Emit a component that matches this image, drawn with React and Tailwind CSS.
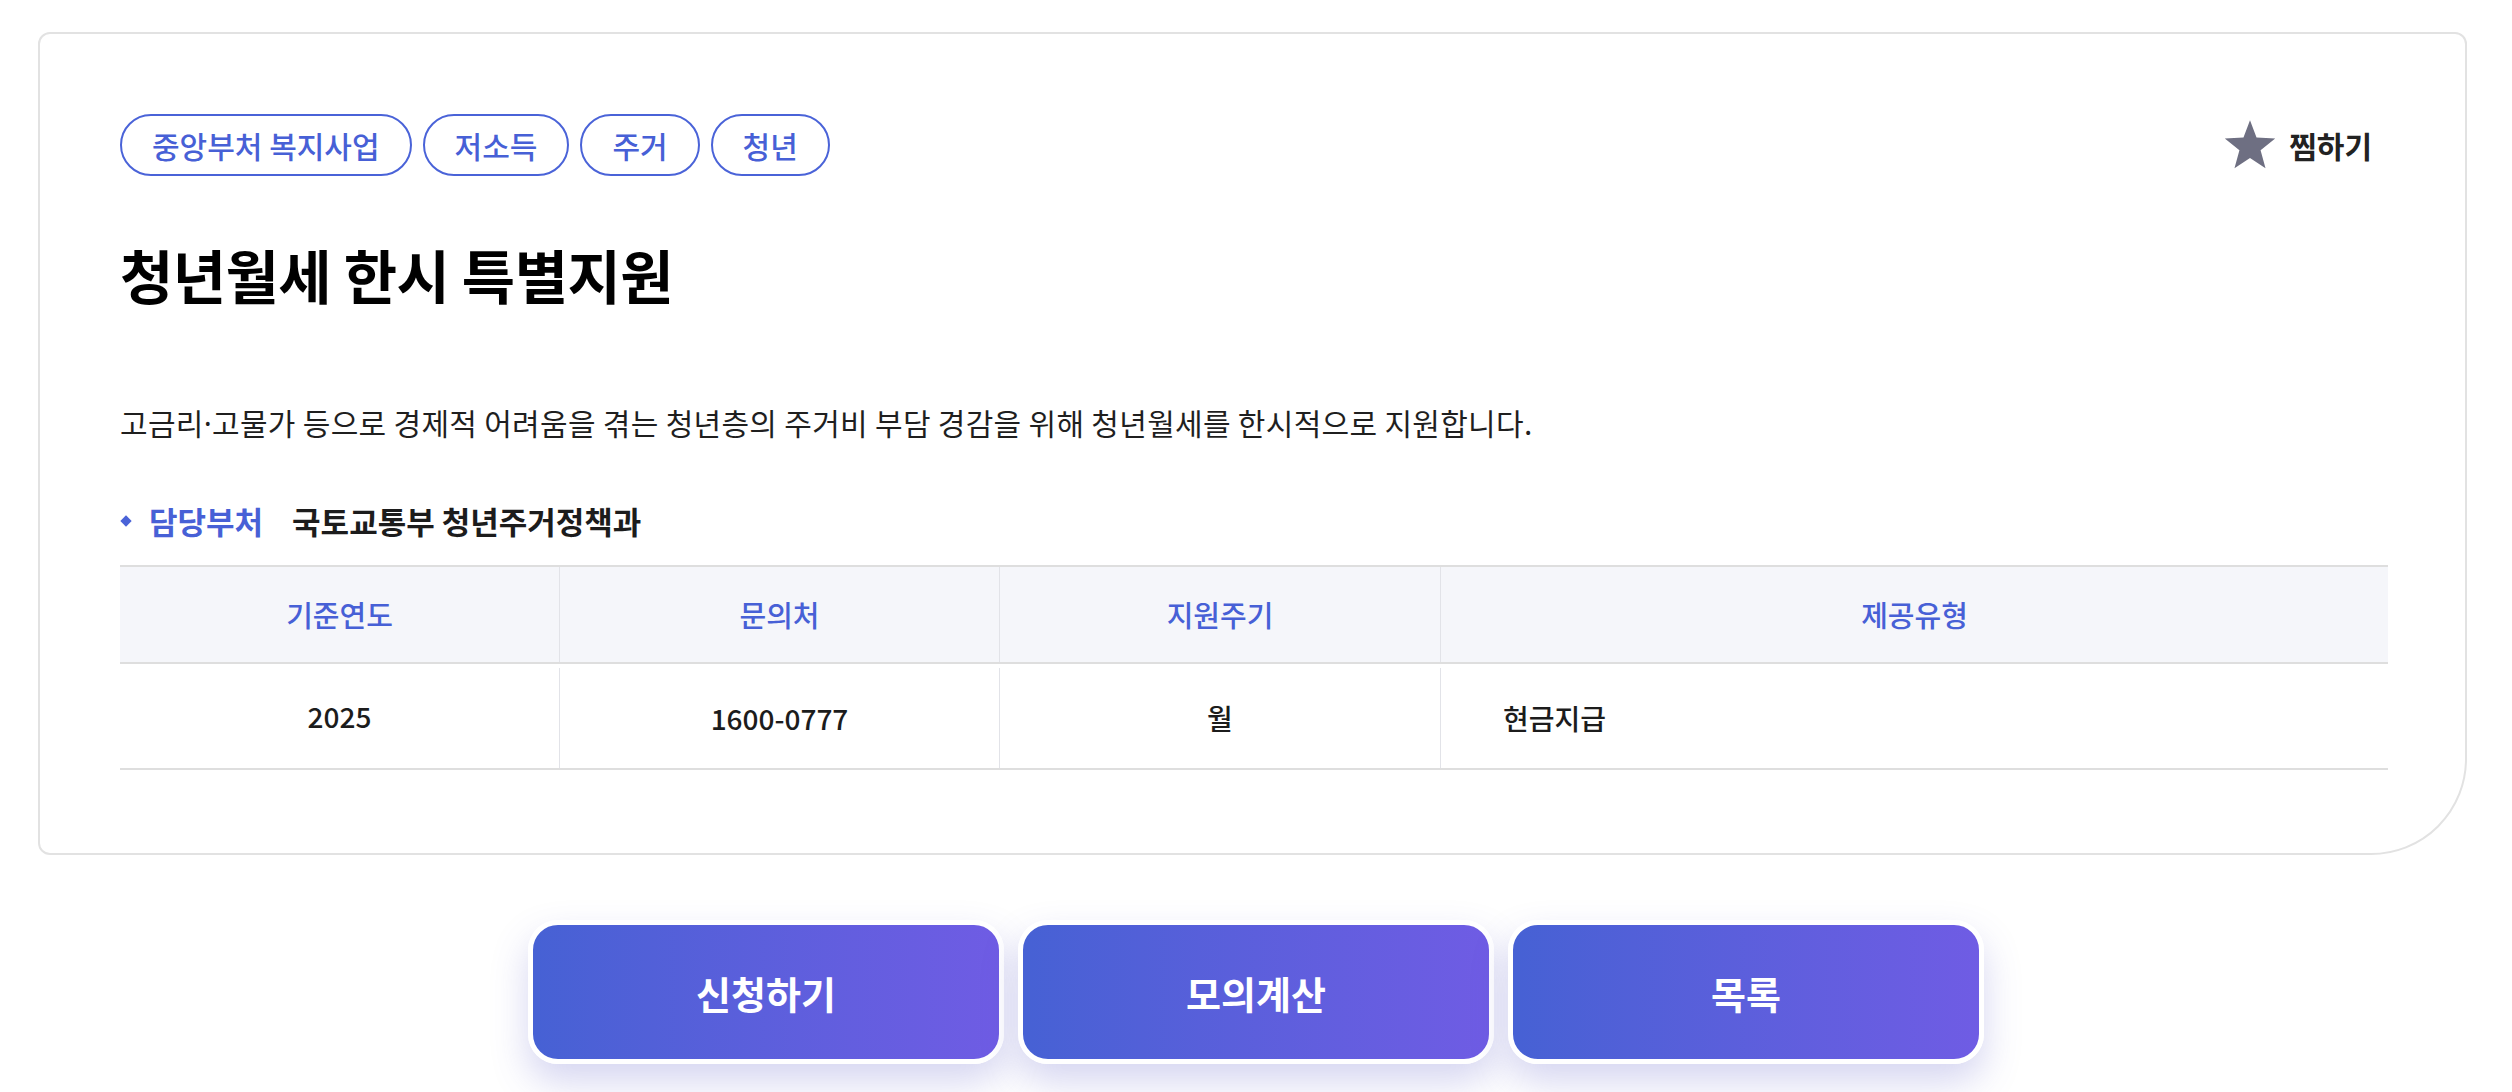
import React from "react";

const tags = ["중앙부처 복지사업", "저소득", "주거", "청년"];

function StarIcon() {
  return (
    <svg width="54" height="52" viewBox="0 0 24 23" aria-hidden="true">
      <polygon
        points="12,0.5 14.9,8.2 23.2,8.6 16.7,13.8 18.9,21.8 12,17.3 5.1,21.8 7.3,13.8 0.8,8.6 9.1,8.2"
        fill="#6e6f82"
      />
    </svg>
  );
}

export default function App() {
  return (
    <div className="min-h-[1092px] w-[2512px] bg-white font-['Noto_Sans_CJK_KR','Noto_Sans',sans-serif] text-[#1c1c1c]">
      <div className="pt-[32px] pl-[38px]">
        <div className="w-[2429px] border-2 border-[#e2e2e2] rounded-tl-[12px] rounded-tr-[12px] rounded-bl-[12px] rounded-br-[96px] bg-white pl-[80px] pr-[77px] pt-[80px] pb-[83px]">
          <div className="flex items-center justify-between">
            <div className="flex items-center gap-[11px]">
              {tags.map((t) => (
                <span
                  key={t}
                  className="flex h-[62px] items-center rounded-full border-2 border-[#4a63d8] px-[30px] text-[30px] font-medium leading-none text-[#4760d6]"
                >
                  {t}
                </span>
              ))}
            </div>
            <button className="flex items-center gap-[12px] pr-[16px] text-[30px] font-semibold text-[#222]">
              <StarIcon />
              <span>찜하기</span>
            </button>
          </div>

          <h1 className="mt-[67px] text-[58px] font-bold leading-[62px] tracking-[-0.01em] text-black">
            청년월세 한시 특별지원
          </h1>

          <p className="mt-[98px] text-[30px] leading-[39px] tracking-[0.3px] text-[#1f1f1f]">
            고금리<span className="font-['Noto_Sans',sans-serif]">·</span>고물가 등으로 경제적 어려움을 겪는 청년층의 주거비 부담 경감을 위해 청년월세를 한시적으로 지원합니다.
          </p>

          <div className="mt-[57px] flex h-[42px] items-center text-[31px] leading-[42px]">
            <span className="ml-[2px] mr-[19px] h-[8px] w-[8px] rotate-45 bg-[#4a63d8]" />
            <span className="font-semibold text-[#4760d6]">담당부처</span>
            <span className="ml-[29px] font-semibold text-[#1c1c1c]">국토교통부 청년주거정책과</span>
          </div>

          <div className="mt-[23px] border-t-2 border-b-2 border-[#dedede]">
            <div className="grid grid-cols-[439px_440px_441px_1fr] h-[97px] bg-[#f5f6fa] border-b-2 border-[#dedede] text-[29px] font-medium text-[#4760d6]">
              <div className="flex items-center justify-center">기준연도</div>
              <div className="flex items-center justify-center border-l border-[#e2e3e8]">문의처</div>
              <div className="flex items-center justify-center border-l border-[#e2e3e8]">지원주기</div>
              <div className="flex items-center justify-center border-l border-[#e2e3e8]">제공유형</div>
            </div>
            <div className="grid grid-cols-[439px_440px_441px_1fr] h-[104px] text-[28px] font-medium text-[#1c1c1c]">
              <div className="flex items-center justify-center">2025</div>
              <div className="mt-[4px] flex items-center justify-center border-l border-[#e2e3e8]">1600-0777</div>
              <div className="mt-[4px] flex items-center justify-center border-l border-[#e2e3e8]">월</div>
              <div className="mt-[4px] flex items-center border-l border-[#e2e3e8] pl-[62px]">현금지급</div>
            </div>
          </div>
        </div>
      </div>

      <div className="mt-[65px] flex justify-center gap-[14px]">
        {["신청하기", "모의계산", "목록"].map((b) => (
          <button
            key={b}
            className="flex h-[144px] w-[476px] items-center justify-center rounded-[30px] border-[5px] border-white bg-linear-to-r from-[#4661d4] to-[#6f5ce4] text-[38px] font-bold text-white shadow-[0_18px_36px_rgba(90,90,200,0.25)]"
          >
            {b}
          </button>
        ))}
      </div>
    </div>
  );
}
